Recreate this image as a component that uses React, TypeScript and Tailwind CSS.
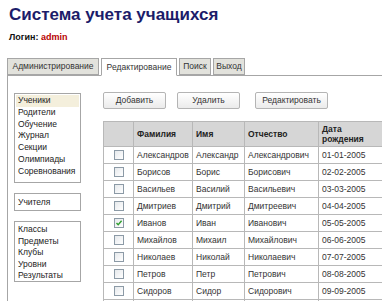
import React from 'react';

const students = [
  ['Александров', 'Александр', 'Александрович', '01-01-2005'],
  ['Борисов', 'Борис', 'Борисович', '02-02-2005'],
  ['Васильев', 'Василий', 'Васильевич', '03-03-2005'],
  ['Дмитриев', 'Дмитрий', 'Дмитреевич', '04-04-2005'],
  ['Иванов', 'Иван', 'Иванович', '05-05-2005'],
  ['Михайлов', 'Михаил', 'Михайлович', '06-06-2005'],
  ['Николаев', 'Николай', 'Николаевич', '07-07-2005'],
  ['Петров', 'Петр', 'Петрович', '08-08-2005'],
  ['Сидоров', 'Сидор', 'Сидорович', '09-09-2005'],
];

const CheckBox = ({ checked }: { checked?: boolean }) => (
  <div className="mx-auto w-[10px] h-[10px] border border-[#8c9aa6] bg-gradient-to-br from-[#e6e9ec] to-white flex items-center justify-center">
    {checked && (
      <svg width="8" height="8" viewBox="0 0 8 8">
        <path d="M1.5 4 L3.2 5.8 L6.6 1.8" fill="none" stroke="#2f9e2f" strokeWidth="1.4" />
      </svg>
    )}
  </div>
);

const Btn = ({ label, w }: { label: string; w: string }) => (
  <div className={`${w} h-[17px] border border-[#b4b4b4] rounded-[2px] bg-gradient-to-b from-white to-[#ebebeb] text-[8.5px] text-[#333] flex items-center justify-center`}>
    {label}
  </div>
);

const Tab = ({ label, w, active }: { label: string; w: string; active?: boolean }) => (
  <div
    className={`${w} border border-[#a6a6a6] text-[8.5px] text-[#333] flex items-center justify-center ${
      active ? 'bg-white border-b-white -mb-px h-[18px]' : 'bg-[#e2e2dc] h-[17px]'
    }`}
  >
    {label}
  </div>
);

export default function App() {
  return (
    <div className="w-[382px] h-[301px] overflow-hidden bg-white font-['Liberation_Sans',Arial,sans-serif]">
      <h1 className="pl-[9px] pt-[5px] h-[30px] text-[17px] font-bold text-[#1c1c6a] leading-[20px]">
        Система учета учащихся
      </h1>
      <div className="pl-[9px] pt-[1px] h-[28px] text-[9px] font-bold text-[#111]">
        Логин: <span className="text-[#b80000]">admin</span>
      </div>
      <div className="ml-[7px] flex items-end gap-[2px] relative z-10">
        <Tab label="Администрирование" w="w-[92px]" />
        <Tab label="Редактирование" w="w-[76px]" active />
        <Tab label="Поиск" w="w-[32px]" />
        <Tab label="Выход" w="w-[32px]" />
      </div>
      <div className="ml-[7px] border-l border-t border-[#a6a6a6] flex h-[230px]">
        <div className="w-[95px] shrink-0 pl-[6px] pt-[17px] flex flex-col gap-[10px] text-[8.5px] text-[#222]">
          <div className="w-[67px] h-[90px] border border-[#a6a6a6] p-px flex flex-col leading-[11.8px]">
            <div className="bg-[#f4efdc] pl-[2px]">Ученики</div>
            <div className="pl-[2px]">Родители</div>
            <div className="pl-[2px]">Обучение</div>
            <div className="pl-[2px]">Журнал</div>
            <div className="pl-[2px]">Секции</div>
            <div className="pl-[2px]">Олимпиады</div>
            <div className="pl-[2px]">Соревнования</div>
          </div>
          <div className="w-[67px] h-[18px] border border-[#a6a6a6] pl-[3px] flex items-center">Учителя</div>
          <div className="w-[67px] h-[61px] border border-[#a6a6a6] pt-[2px] pl-[3px] leading-[11.6px]">
            <div>Классы</div>
            <div>Предметы</div>
            <div>Клубы</div>
            <div>Уровни</div>
            <div>Результаты</div>
          </div>
        </div>
        <div className="flex-1 min-w-0 overflow-hidden pt-[16px]">
          <div className="flex">
            <Btn label="Добавить" w="w-[63px]" />
            <div className="w-[11px]" />
            <Btn label="Удалить" w="w-[63px]" />
            <div className="w-[15px]" />
            <Btn label="Редактировать" w="w-[73px]" />
          </div>
          <table className="mt-[12px] border-collapse text-[8.5px] text-[#333] w-[300px] table-fixed">
            <colgroup>
              <col className="w-[30px]" />
              <col className="w-[59px]" />
              <col className="w-[52px]" />
              <col className="w-[74px]" />
              <col className="w-[85px]" />
            </colgroup>
            <thead>
              <tr className="bg-[#d6d6d6] h-[25px] text-[#222]">
                <th className="border border-[#b8b8b8]" />
                <th className="border border-[#b8b8b8] text-left pl-[3px] font-bold">Фамилия</th>
                <th className="border border-[#b8b8b8] text-left pl-[3px] font-bold">Имя</th>
                <th className="border border-[#b8b8b8] text-left pl-[3px] font-bold">Отчество</th>
                <th className="border border-[#b8b8b8] text-left pl-[3px] font-bold leading-[10px]">
                  Дата
                  <br />
                  рождения
                </th>
              </tr>
            </thead>
            <tbody>
              {students.map((s, i) => (
                <tr key={i} className="h-[17px]">
                  <td className="border border-[#b8b8b8]">
                    <CheckBox checked={i === 4} />
                  </td>
                  {s.map((c, j) => (
                    <td key={j} className="border border-[#b8b8b8] pl-[3px] whitespace-nowrap">
                      {c}
                    </td>
                  ))}
                </tr>
              ))}
              <tr className="h-[17px]">
                <td className="border border-[#b8b8b8]" />
                <td className="border border-[#b8b8b8]" />
                <td className="border border-[#b8b8b8]" />
                <td className="border border-[#b8b8b8]" />
                <td className="border border-[#b8b8b8]" />
              </tr>
            </tbody>
          </table>
        </div>
      </div>
    </div>
  );
}
